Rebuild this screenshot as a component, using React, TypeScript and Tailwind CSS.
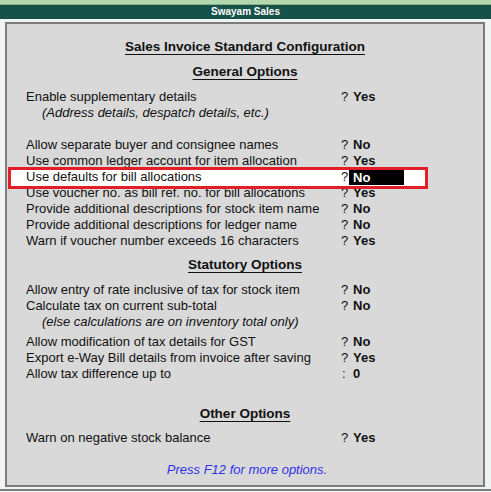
import React from "react";

type Row =
  | { kind: "opt"; label: string; value: string; sep?: string; hl?: boolean; mt?: string }
  | { kind: "note"; text: string; mt?: string }
  | { kind: "head"; text: string; mt: string };

const rows: Row[] = [
  { kind: "head", text: "General Options", mt: "mt-[9px]" },
  { kind: "opt", label: "Enable supplementary details", value: "Yes", mt: "mt-[9px]" },
  { kind: "note", text: "(Address details, despatch details, etc.)" },
  { kind: "opt", label: "Allow separate buyer and consignee names", value: "No", mt: "mt-[16px]" },
  { kind: "opt", label: "Use common ledger account for item allocation", value: "Yes" },
  { kind: "opt", label: "Use defaults for bill allocations", value: "No", hl: true },
  { kind: "opt", label: "Use voucher no. as bill ref. no. for bill allocations", value: "Yes" },
  { kind: "opt", label: "Provide additional descriptions for stock item name", value: "No" },
  { kind: "opt", label: "Provide additional descriptions for ledger name", value: "No" },
  { kind: "opt", label: "Warn if voucher number exceeds 16 characters", value: "Yes" },
  { kind: "head", text: "Statutory Options", mt: "mt-[8px]" },
  { kind: "opt", label: "Allow entry of rate inclusive of tax for stock item", value: "No", mt: "mt-[9px]" },
  { kind: "opt", label: "Calculate tax on current sub-total", value: "No" },
  { kind: "note", text: "(else calculations are on inventory total only)" },
  { kind: "opt", label: "Allow modification of tax details for GST", value: "No", mt: "mt-[4px]" },
  { kind: "opt", label: "Export e-Way Bill details from invoice after saving", value: "Yes" },
  { kind: "opt", label: "Allow tax difference up to", value: "0", sep: ":" },
  { kind: "head", text: "Other Options", mt: "mt-[24px]" },
  { kind: "opt", label: "Warn on negative stock balance", value: "Yes", mt: "mt-[8px]" },
];

function RowView({ r }: { r: Row }) {
  if (r.kind === "head") {
    return (
      <div className={`${r.mt} h-[16px] leading-[16px] text-center text-[13.5px] font-bold text-[#111] underline decoration-1 underline-offset-[3px]`}>
        {r.text}
      </div>
    );
  }
  if (r.kind === "note") {
    return (
      <div className={`${r.mt ?? ""} h-[16px] leading-[16px] pl-[35px] text-[13px] italic text-[#111]`}>{r.text}</div>
    );
  }
  if (r.hl) {
    return (
      <div className={`${r.mt ?? ""} relative h-[16px] leading-[16px]`}>
        <div className="absolute left-[1px] top-[-2px] w-[420px] h-[22px] bg-white border-[3px] border-[#e31e26] z-10" />
        <div className="relative z-20 grid grid-cols-[333px_9px_55px] text-[13px] text-[#111]">
          <span className="pl-[19px] whitespace-nowrap">{r.label}</span>
          <span className="pl-[1px]">?</span>
          <span className="bg-black text-white font-bold pl-[4px] h-[15px] leading-[15px] mt-[1px]">{r.value}</span>
        </div>
      </div>
    );
  }
  return (
    <div className={`${r.mt ?? ""} h-[16px] leading-[16px] grid grid-cols-[333px_13px_auto] text-[13px] text-[#111]`}>
      <span className="pl-[19px] whitespace-nowrap">{r.label}</span>
      <span className={r.sep ? "pl-[2px]" : "pl-[1px]"}>{r.sep ?? "?"}</span>
      <span className="font-bold">{r.value}</span>
    </div>
  );
}

export default function App() {
  return (
    <div
      className="w-[491px] h-[492px] bg-[#eef5f3] flex flex-col overflow-hidden"
      style={{ fontFamily: '"Liberation Sans", Arial, sans-serif' }}
    >
      <div className="h-[4px] bg-[#b3d8ab]" />
      <div className="h-[1px] bg-[#8aab8c]" />
      <div className="h-[14px] bg-[#17524a] text-white text-[10px] font-bold leading-[14px] text-center">
        Swayam Sales
      </div>
      <div className="mt-[3px] ml-[5px] w-[480px] h-[465px] border-2 border-[#7c7c7c] bg-[#d9d9d9] pt-[15px] flex flex-col">
        <div className="h-[16px] leading-[16px] text-center text-[13.5px] font-bold text-[#111] underline decoration-1 underline-offset-[3px]">
          Sales Invoice Standard Configuration
        </div>
        {rows.map((r, i) => (
          <RowView key={i} r={r} />
        ))}
        <div className="mt-[16px] h-[16px] leading-[16px] text-center text-[13px] italic text-[#3030e8] pl-[4px]">
          Press F12 for more options.
        </div>
      </div>
      <div className="mt-[2px] h-[2px] bg-[#7f7f7f]" />
    </div>
  );
}
